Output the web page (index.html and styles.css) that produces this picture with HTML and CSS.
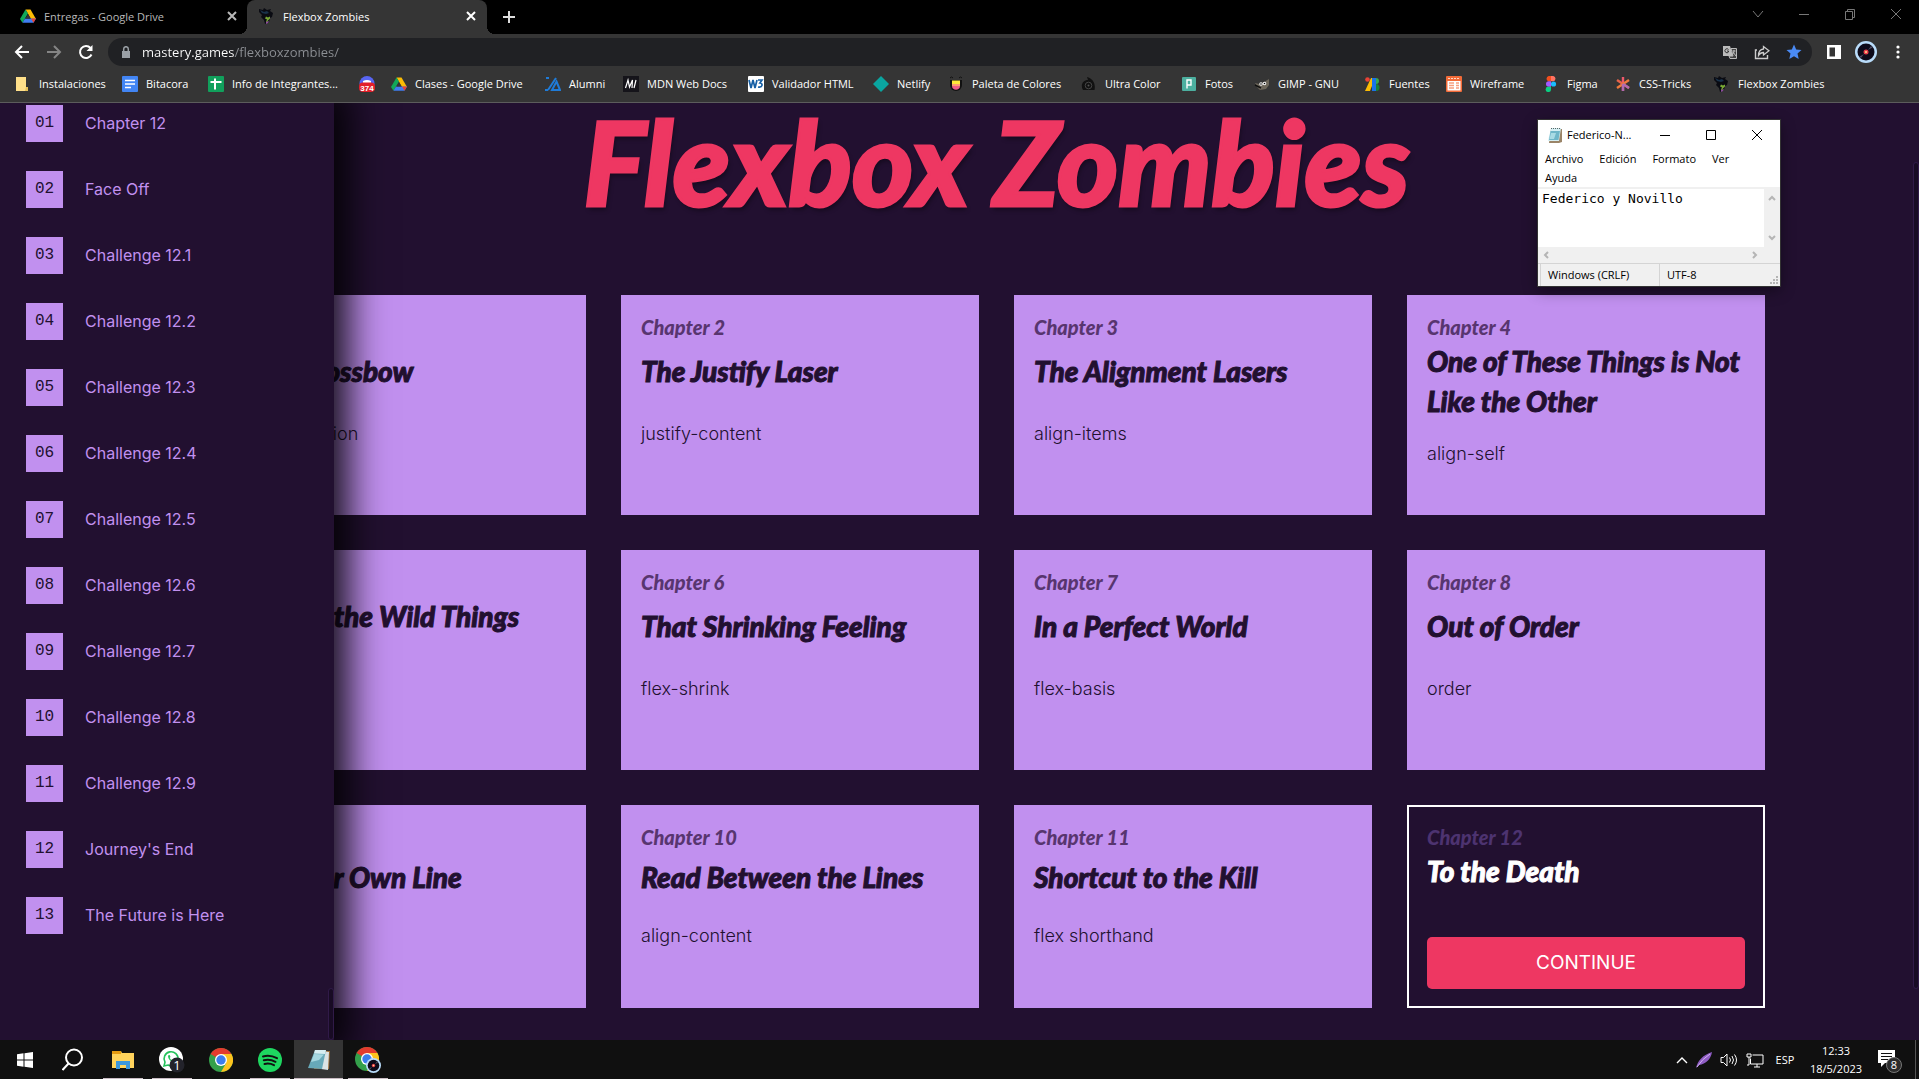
FILE: index.html
```html
<!DOCTYPE html>
<html lang="es">
<head>
<meta charset="utf-8">
<meta name="viewport" content="width=device-width, initial-scale=1">
<title>Flexbox Zombies</title>
<link rel="stylesheet" href="styles.css">
</head>
<body>
<svg class="sprite" aria-hidden="true">
  <symbol id="drive" viewBox="0 0 16 16"><path d="M5.5 1.500h5L16 11h-5z" fill="#fbbc04"/><path d="M5.500 1.500 0 11l2.500 3.700L8 5.500z" fill="#11a85a"/><path d="M5 10.500h11l-2.500 4.200h-11z" fill="#3f7df0"/><path d="M11 10.500h5l-2.500 4.200z" fill="#e94235"/><path d="m8 6 2.600 4.500H5.400z" fill="#353535"/></symbol>
  <symbol id="zombie" viewBox="0 0 16 16"><path d="M0 1l4 1 1-2 3 2 4-1-1 2 3 2-1 4-2 1-1 4-4 2-1-4-3-3 1-2-3-3z" fill="#0a0b12"/><path d="M1 2l4 2 3-1 2 2-3 1-4-1z" fill="#19324a"/><path d="M7 8.500l2 1 2-1v2l-2 2-1 2-1-1 1-2-2-1z" fill="#78a834"/><path d="M7 14l3-1-1 2-2 1z" fill="#8b4c9a"/></symbol>
  <symbol id="chrome" viewBox="0 0 24 24"><circle cx="12" cy="12" r="12" fill="#34a04b"/><path d="M12 12 1.600 6A12 12 0 0 1 22.400 6z" fill="#e33b2e"/><path d="M12 6h10.400A12 12 0 0 1 12 24l5.200-9z" fill="#fcc31e"/><circle cx="12" cy="12" r="6" fill="#fff"/><circle cx="12" cy="12" r="4.700" fill="#3b7ded"/></symbol>
  <symbol id="avatar" viewBox="0 0 22 22"><circle cx="11" cy="11" r="11" fill="#b9dcfa"/><circle cx="11" cy="11" r="8.500" fill="#0d0a1a"/><path d="M13 9 16 5a8 8 0 0 1 1.500 1.500zM9 13l-3 4a8 8 0 0 1-1.500-1.500z" fill="#4d4b62"/><circle cx="11" cy="11" r="2.500" fill="#e83e4c"/><circle cx="11" cy="11" r="1" fill="#ffd98a"/></symbol>
  <symbol id="notes" viewBox="0 0 16 16"><path d="M4 2h11v13l-3 1H2z" fill="#9a8468"/><path d="M4 1h10l-2 13H1z" fill="#d6eff3"/><path d="M3.500 4H13l-1.500 9H2z" fill="#6fb6c8"/><path d="M4 6h5L7 12H2.500z" fill="#a9dbe4"/><path d="M4 1.500h10" stroke="#566" stroke-dasharray="1 1"/></symbol>
</svg>

<header class="browser">
  <div class="tabstrip" role="tablist">
    <button class="tab" role="tab"><svg class="ico"><use href="#drive"/></svg><span class="tab-name">Entregas - Google Drive</span><svg class="x" viewBox="0 0 10 10"><path d="m1 1 8 8M9 1 1 9"/></svg></button>
    <button class="tab active" role="tab" aria-selected="true"><svg class="ico"><use href="#zombie"/></svg><span class="tab-name">Flexbox Zombies</span><svg class="x" viewBox="0 0 10 10"><path d="m1 1 8 8M9 1 1 9"/></svg></button>
    <button class="new-tab" aria-label="Nueva pestaña"><svg width="12" height="12" viewBox="0 0 12 12"><path d="M6 0v12M0 6h12" stroke="#ddd" stroke-width="2"/></svg></button>
    <div class="win-buttons">
      <button aria-label="Buscar pestañas"><svg viewBox="0 0 12 12"><path d="m1 3 5 6 5-6"/></svg></button>
      <button aria-label="Minimizar"><svg viewBox="0 0 12 12"><path d="M1 6.500h10"/></svg></button>
      <button aria-label="Restaurar"><svg viewBox="0 0 12 12"><path d="M1.500 3.500h7v8h-7zM3.500 3.500v-2h7v8h-2"/></svg></button>
      <button aria-label="Cerrar"><svg viewBox="0 0 12 12"><path d="m1 1 10 10M11 1 1 11"/></svg></button>
    </div>
  </div>

  <div class="toolbar">
    <button aria-label="Atrás"><svg viewBox="0 0 16 16"><path d="M15 8H2M8 2 2 8l6 6" fill="none" stroke="#fff" stroke-width="2"/></svg></button>
    <button aria-label="Adelante"><svg viewBox="0 0 16 16"><path d="M1 8h13M8 2l6 6-6 6" fill="none" stroke="#858585" stroke-width="2"/></svg></button>
    <button aria-label="Recargar"><svg viewBox="0 0 16 16"><path d="M13.500 10.500A6 6 0 1 1 12.500 4" fill="none" stroke="#fff" stroke-width="2"/><path d="M14.500 1v6h-6z" fill="#fff"/></svg></button>
    <div class="omnibox">
      <svg class="lock" viewBox="0 0 10 12"><rect x="1" y="5" width="8" height="7" fill="#9aa0a6"/><path d="M2.700 5V3a2.300 2.300 0 0 1 4.600 0v2" fill="none" stroke="#9aa0a6" stroke-width="1.500"/></svg>
      <input class="url" type="text" value="mastery.games/flexboxzombies/" aria-label="Dirección">
      <button aria-label="Traducir"><svg viewBox="0 0 16 16"><path d="M1 2h7l3 10H1z" fill="#bbb"/><path d="M9 4.500h5.500v10H8L7 12h4z" fill="#444" stroke="#bbb"/><path d="M10.500 7h3M12 6v1c0 2-1 3-2 4M11 8l3 4" stroke="#bbb" fill="none"/><path d="M6.500 5.500a2 2 0 1 0 0 2.500V7H5" stroke="#333" fill="none"/></svg></button>
      <button aria-label="Compartir"><svg viewBox="0 0 16 16"><path d="M3 6H1.500v8.500h12V11" fill="none" stroke="#ccc" stroke-width="1.400"/><path d="M9.500 2.500V5C6 5.500 4.500 8 4.500 11.500 6 9 7.500 8.500 9.500 8.500V11L15 6.700z" fill="none" stroke="#ccc" stroke-width="1.300"/></svg></button>
      <button aria-label="Marcador"><svg viewBox="0 0 16 16"><path d="m8 .5 2.200 5 5.300.5-4 3.600 1.200 5.400L8 12.200 3.300 15l1.200-5.400-4-3.600 5.300-.5z" fill="#4a8af4"/></svg></button>
    </div>
    <button aria-label="Panel lateral"><svg viewBox="0 0 16 16"><path d="M1 1h14v14H1zM3.500 3.500v9H9v-9z" fill="#fff" fill-rule="evenodd"/></svg></button>
    <button class="profile" aria-label="Perfil"><svg><use href="#avatar"/></svg></button>
    <button aria-label="Menú"><svg viewBox="0 0 16 16" fill="#fff"><circle cx="8" cy="3" r="1.600"/><circle cx="8" cy="8" r="1.600"/><circle cx="8" cy="13" r="1.600"/></svg></button>
  </div>

  <nav class="bookmarks" aria-label="Marcadores">
    <a href="#"><svg class="ico" viewBox="0 0 16 16"><path d="M1 1h10v10h2v4H1z" fill="#ffe08a"/><path d="M11 11h2v4h-3z" fill="#e8c25a"/></svg>Instalaciones</a>
    <a href="#"><svg class="ico" viewBox="0 0 16 16"><rect width="16" height="16" rx="1" fill="#4285f4"/><path d="M3 4.500h10M3 8h10M3 11.500h6" stroke="#fff" stroke-width="1.700"/></svg>Bitacora</a>
    <a href="#"><svg class="ico" viewBox="0 0 16 16"><rect width="16" height="16" rx="1" fill="#11a05c"/><path d="M2.500 6h11M7 2.500v11" stroke="#fff" stroke-width="2"/></svg>Info de Integrantes...</a>
    <a href="#" aria-label="374"><svg class="ico" viewBox="0 0 16 16"><circle cx="8" cy="7.500" r="7.500" fill="#5865f2"/><path d="M4 5q4-2 8 0v3H4z" fill="#fff"/><rect y="6.500" width="16" height="9.500" rx="4" fill="#e3202a"/><text x="8" y="14.500" text-anchor="middle" class="badge-text">374</text></svg></a>
    <a href="#"><svg class="ico"><use href="#drive"/></svg>Clases - Google Drive</a>
    <a href="#"><svg class="ico" viewBox="0 0 16 16"><path d="M1 2h3M11 2 3 14M0 14h3" fill="none" stroke="#1f7bd8" stroke-width="2"/><path d="M11.500 5.500 15 14H7z" fill="none" stroke="#1f7bd8" stroke-width="2"/></svg>Alumni</a>
    <a href="#"><svg class="ico" viewBox="0 0 16 16"><rect width="16" height="16" fill="#15141a"/><path d="m2.500 12 2.500-8 1.500 7L9.500 4 9 12m4-8-2 8" fill="none" stroke="#fff" stroke-width="1.200"/></svg>MDN Web Docs</a>
    <a href="#"><svg class="ico" viewBox="0 0 16 16"><rect width="16" height="16" rx="1" fill="#fff"/><path d="m1 4 2 8 2-8 2 8 2-8" fill="none" stroke="#1760a5" stroke-width="1.700"/><path d="M10 4h4l-2 3c3 0 3 5-2 4" fill="none" stroke="#1760a5" stroke-width="1.700"/></svg>Validador HTML</a>
    <a href="#"><svg class="ico" viewBox="0 0 16 16"><path d="m8 0 8 8-8 8-8-8z" fill="#0aa5a0"/></svg>Netlify</a>
    <a href="#"><svg class="ico" viewBox="0 0 16 16"><path d="M2 4h12v5a6 6 0 0 1-12 0z" fill="#111"/><path d="M4 4.500h8V8H4z" fill="#ffe838"/><path d="M4 8h8v2H4z" fill="#ff9b73"/><path d="M4 10h8c0 5-8 5-8 0z" fill="#ef5c87"/><path d="M2 2q1.500-2 3 0M11 2q1.500-2 3 0" stroke="#111" fill="none"/></svg>Paleta de Colores</a>
    <a href="#"><svg class="ico" viewBox="0 0 16 16"><path d="M6 1c5 1 9 6 7.500 13H2C-1 9 2 4 7 4z" fill="#111"/><circle cx="7.500" cy="9.500" r="3.300" fill="none" stroke="#444"/><circle cx="7.500" cy="9.500" r="1" fill="#555"/></svg>Ultra Color</a>
    <a href="#"><svg class="ico" viewBox="0 0 16 16"><rect x="1" y="1" width="14" height="14" rx="1" fill="#4caf9f"/><path d="M6 12.500V4h4v5H6" fill="none" stroke="#fff" stroke-width="1.400"/></svg>Fotos</a>
    <a href="#"><svg class="ico" viewBox="0 0 16 16"><path d="M1 7l4 1 5-2 5-3v6l-3 4-6 1-3-3z" fill="#6c665a"/><circle cx="7" cy="8" r="1.700" fill="#fff"/><circle cx="10.500" cy="7.500" r="1.700" fill="#fff"/><circle cx="7" cy="8" r=".8"/><circle cx="10.500" cy="7.500" r=".8"/><path d="m1 9 6 3" stroke="#111" stroke-width="1.500"/></svg>GIMP - GNU</a>
    <a href="#"><svg class="ico" viewBox="0 0 16 16"><circle cx="2.500" cy="3.500" r="2.300" fill="#ea4335"/><path d="M6 2h4L5 15H0z" fill="#fbbc04"/><path d="M7 2h4v13H7z" fill="#1a73e8"/><path d="M11 2a3 3 0 0 1 0 6z" fill="#34a853"/><path d="M11 8a3.500 3.500 0 0 1 0 7z" fill="#188038"/></svg>Fuentes</a>
    <a href="#"><svg class="ico" viewBox="0 0 16 16"><rect width="16" height="16" rx="1" fill="#f26b38"/><path d="M1.500 5h13v9.500h-13z" fill="#fff"/><path d="M2 2.500h12" stroke="#ffd9c8" stroke-dasharray="2 1"/><path d="M3 7h5M3 9.500h5M3 12h5M10 7h3M10 9.500h3M10 12h3" stroke="#f6a080" stroke-width="1.300"/></svg>Wireframe</a>
    <a href="#"><svg class="ico" viewBox="0 0 16 16"><path d="M8 0H5.700a2.700 2.700 0 0 0 0 5.300H8z" fill="#f24e1e"/><path d="M8 0h2.300a2.700 2.700 0 0 1 0 5.300H8z" fill="#ff7262"/><path d="M8 5.300H5.700a2.700 2.700 0 0 0 0 5.400H8z" fill="#a259ff"/><circle cx="10.500" cy="8" r="2.600" fill="#1abcfe"/><path d="M8 10.700H5.700A2.700 2.700 0 1 0 8 13.300z" fill="#0acf83"/></svg>Figma</a>
    <a href="#"><svg class="ico" viewBox="0 0 16 16" stroke-width="2.400"><path d="M8 1v14" stroke="#ee5a6a"/><path d="m2 4 12 8" stroke="#e8634a"/><path d="M14 4 2 12" stroke="#f0793c"/><path d="m8 8 6 4M8 8v7" stroke="#b06ab0"/></svg>CSS-Tricks</a>
    <a href="#"><svg class="ico"><use href="#zombie"/></svg>Flexbox Zombies</a>
  </nav>
</header>

<div class="page">
  <main class="home">
    <h1 class="hero">Flexbox Zombies</h1>
    <section class="chapters">
      <article class="card"><p class="num">Chapter 1</p><h2>The Crossbow</h2><p class="prop">flex-direction</p></article>
      <article class="card"><p class="num">Chapter 2</p><h2>The Justify Laser</h2><p class="prop">justify-content</p></article>
      <article class="card"><p class="num">Chapter 3</p><h2>The Alignment Lasers</h2><p class="prop">align-items</p></article>
      <article class="card"><p class="num">Chapter 4</p><h2>One of These Things is Not Like the Other</h2><p class="prop">align-self</p></article>
      <article class="card"><p class="num">Chapter 5</p><h2>Where the Wild Things Grow</h2><p class="prop">flex-grow</p></article>
      <article class="card"><p class="num">Chapter 6</p><h2>That Shrinking Feeling</h2><p class="prop">flex-shrink</p></article>
      <article class="card"><p class="num">Chapter 7</p><h2>In a Perfect World</h2><p class="prop">flex-basis</p></article>
      <article class="card"><p class="num">Chapter 8</p><h2>Out of Order</h2><p class="prop">order</p></article>
      <article class="card short"><p class="num">Chapter 9</p><h2>On Your Own Line</h2><p class="prop">flex-wrap</p></article>
      <article class="card short"><p class="num">Chapter 10</p><h2>Read Between the Lines</h2><p class="prop">align-content</p></article>
      <article class="card short"><p class="num">Chapter 11</p><h2>Shortcut to the Kill</h2><p class="prop">flex shorthand</p></article>
      <article class="card current"><p class="num">Chapter 12</p><h2>To the Death</h2><button class="continue">CONTINUE</button></article>
    </section>
  </main>

  <aside class="drawer">
    <nav class="levels" aria-label="Niveles">
      <a href="#"><span class="level-num">01</span>Chapter 12</a>
      <a href="#"><span class="level-num">02</span>Face Off</a>
      <a href="#"><span class="level-num">03</span>Challenge 12.1</a>
      <a href="#"><span class="level-num">04</span>Challenge 12.2</a>
      <a href="#"><span class="level-num">05</span>Challenge 12.3</a>
      <a href="#"><span class="level-num">06</span>Challenge 12.4</a>
      <a href="#"><span class="level-num">07</span>Challenge 12.5</a>
      <a href="#"><span class="level-num">08</span>Challenge 12.6</a>
      <a href="#"><span class="level-num">09</span>Challenge 12.7</a>
      <a href="#"><span class="level-num">10</span>Challenge 12.8</a>
      <a href="#"><span class="level-num">11</span>Challenge 12.9</a>
      <a href="#"><span class="level-num">12</span>Journey's End</a>
      <a href="#"><span class="level-num">13</span>The Future is Here</a>
    </nav>
    <span class="thumb drawer-thumb"></span>
  </aside>
  <span class="thumb page-thumb"></span>
</div>

<section class="notepad" aria-label="Bloc de notas">
  <div class="np-title">
    <svg class="ico"><use href="#notes"/></svg><span class="np-name">Federico-N...</span>
    <button aria-label="Minimizar"><svg viewBox="0 0 12 12"><path d="M1 6.500h10"/></svg></button>
    <button aria-label="Maximizar"><svg viewBox="0 0 12 12"><path d="M1.500 1.500h9v9h-9z"/></svg></button>
    <button aria-label="Cerrar"><svg viewBox="0 0 12 12"><path d="m1 1 10 10M11 1 1 11"/></svg></button>
  </div>
  <div class="np-menu"><button>Archivo</button><button>Edición</button><button>Formato</button><button>Ver</button><button>Ayuda</button></div>
  <div class="np-body">
    <textarea aria-label="Texto" spellcheck="false">Federico y Novillo</textarea>
    <div class="np-vscroll"><svg viewBox="0 0 8 6"><path d="m1 5 3-3 3 3"/></svg><svg viewBox="0 0 8 6"><path d="m1 1 3 3 3-3"/></svg></div>
  </div>
  <div class="np-hscroll"><svg viewBox="0 0 6 8"><path d="M5 1 2 4l3 3"/></svg><svg viewBox="0 0 6 8"><path d="m1 1 3 3-3 3"/></svg></div>
  <div class="np-status"><span class="np-eol">Windows (CRLF)</span><span class="np-enc">UTF-8</span><svg width="8" height="8" viewBox="0 0 8 8" fill="#b5b5b5"><path d="M6 0h2v2H6zM6 3h2v2H6zM3 3h2v2H3zM6 6h2v2H6zM3 6h2v2H3zM0 6h2v2H0z"/></svg></div>
</section>

<footer class="taskbar">
  <div class="apps">
    <button aria-label="Inicio"><svg width="16" height="16" viewBox="0 0 16 16" fill="#fff"><path d="M0 2.200 6.500 1.300v6.200H0zM7.500 1.200 16 0v7.500H7.500zM0 8.500h6.500v6.200L0 13.800zM7.500 8.500H16V16l-8.500-1.200z"/></svg></button>
    <button aria-label="Buscar"><svg width="24" height="24" viewBox="2 0 24 24"><circle cx="14" cy="9.500" r="8" fill="none" stroke="#fff" stroke-width="2"/><path d="m8.500 15.500-6 6.500" stroke="#fff" stroke-width="2"/></svg></button>
    <button class="open" aria-label="Explorador"><svg width="22" height="22" viewBox="0 0 22 22"><path d="M0 2h9l1 2h12v15H0z" fill="#ffd35c"/><path d="M0 2h9v3H0z" fill="#e59b12"/><path d="M4 12h14v8h-4v-4H8v4H4z" fill="#3c97dc"/></svg></button>
    <button class="open" aria-label="WhatsApp"><svg width="26" height="26" viewBox="0 0 26 26"><circle cx="12" cy="12" r="12" fill="#fff"/><path d="m5 19 1-3.800A7 7 0 1 1 9 18z" fill="none" stroke="#25c25b" stroke-width="1.600"/><path d="M9 8.500c0 4 3 6.500 6 6.500l1-1.500-2-1-1 .7c-1-.4-2-1.400-2.200-2.400l.7-.8-.8-2z" fill="#25c25b"/><circle cx="18" cy="18" r="7.500" fill="#23232b"/><text x="18" y="23" text-anchor="middle" class="count">1</text></svg></button>
    <button aria-label="Chrome"><svg width="24" height="24"><use href="#chrome"/></svg></button>
    <button class="open" aria-label="Spotify"><svg width="24" height="24" viewBox="0 0 24 24"><circle cx="12" cy="12" r="12" fill="#1ed760"/><path d="M5 8.500q7-2 14 1.700M5.800 12.300q6-1.500 11.700 1.500M6.500 16q5-1.200 9.500 1.200" fill="none" stroke="#111" stroke-width="2" stroke-linecap="round"/></svg></button>
    <button class="open focus" aria-label="Bloc de notas"><svg width="24" height="24" viewBox="0 0 24 24"><path d="M8 3h15l-1 18H7z" fill="#9b6c38"/><path d="m15 3 7 1-1 18-7-1z" fill="#dbe3e5"/><path d="M8 2h11l-4 19-14-1z" fill="#67a9b9"/><path d="M8 2h11l-1 4-11-.500z" fill="#d7eef2"/><path d="m7 6 10 .500L12 12 4 14z" fill="#a5d7e0"/></svg></button>
    <button class="open" aria-label="Chrome, perfil"><svg width="26" height="26" viewBox="0 0 26 26"><use href="#chrome" width="24" height="24"/><use href="#avatar" x="11" y="11" width="15" height="15"/></svg></button>
  </div>
  <div class="tray">
    <svg width="12" height="12" viewBox="0 0 12 12"><path d="m1 9 5-5 5 5" fill="none" stroke="#fff" stroke-width="1.400"/></svg>
    <svg width="16" height="16" viewBox="0 0 16 16"><path d="M0 16C2 8 7 3 16 0c-1 7-6 12-13 13z" fill="#8e5cc4"/><path d="M1 15Q6 7 14 2" stroke="#d3b3f2" fill="none"/></svg>
    <svg width="18" height="16" viewBox="0 0 18 16"><path d="M1 5.500h2.500L7 2v12l-3.500-3.500H1zM9.500 5.500q2 2.500 0 5M12 4q3 4 0 8M14.500 2.500q4 5.500 0 11" fill="none" stroke="#fff"/></svg>
    <svg width="18" height="16" viewBox="0 0 18 16"><path d="M4.500 6.500V12H17V3H6.500M8 15h6M11 12v3M1 2h4v3H1zM3 5v8H1" fill="none" stroke="#fff"/></svg>
    <span class="lang">ESP</span>
    <time class="clock" datetime="2023-05-18T12:33"><span>12:33</span><span>18/5/2023</span></time>
    <button class="notify" aria-label="8 notificaciones"><svg width="26" height="26" viewBox="0 0 26 26"><path d="M1 3h17v13H8l-4 4v-4H1z" fill="#fff"/><path d="M4 6.500h11M4 9.500h11M4 12.500h7" stroke="#111"/><circle cx="17" cy="18" r="7.500" fill="#2b2b2b" stroke="#777"/><text x="17" y="22" text-anchor="middle" class="note-count">8</text></svg></button>
  </div>
</footer>
</body>
</html>
```
FILE: styles.css
```css
:root {
  --night: #221030;
  --lilac: #c190ef;
  --pink: #ee3762;
  --chrome: #353535;
  --ui: "Open Sans", "Noto Sans", sans-serif;
  --body: Inter, sans-serif;
  --display: Lato, sans-serif;
}

* { box-sizing: border-box; }

body {
  margin: 0;
  height: 100vh;
  display: flex;
  flex-direction: column;
  overflow: hidden;
  background: var(--night);
  font-family: var(--ui);
  font-size: 12px;
}

button {
  padding: 0;
  border: 0;
  background: none;
  color: inherit;
  font: inherit;
}

a { color: inherit; text-decoration: none; }
h1, h2, p { margin: 0; }
svg { display: block; flex: none; }
.sprite { position: absolute; width: 0; height: 0; }
.ico { width: 16px; height: 16px; }

/* Browser frame */
.browser { flex: none; background: var(--chrome); border-bottom: 1px solid #5c5c5c; }
.tabstrip { display: flex; height: 34px; background: #000; }

.tab {
  display: flex;
  align-items: center;
  gap: 8px;
  width: 240px;
  padding: 0 11px 2px 12px;
  color: #b8b8b8;
  font-size: 11px;
  text-align: left;
}
.tab:first-child { width: 247px; padding: 0 10px 2px 20px; }
.tab.active {
  position: relative;
  background: var(--chrome);
  border-radius: 8px 8px 0 0;
  color: #fff;
}
.tab.active::before, .tab.active::after {
  content: "";
  position: absolute;
  bottom: 0;
  width: 8px;
  height: 8px;
}
.tab.active::before { left: -8px; background: radial-gradient(circle at 0 0, transparent 8px, var(--chrome) 8px); }
.tab.active::after { right: -8px; background: radial-gradient(circle at 100% 0, transparent 8px, var(--chrome) 8px); }
.tab-name { flex: 1; }
.x { width: 10px; height: 10px; fill: none; stroke: currentColor; stroke-width: 2; }
.new-tab { width: 44px; display: grid; place-items: center; }
.win-buttons { display: flex; margin-left: auto; height: 28px; }
.win-buttons button { width: 46px; display: grid; place-items: center; }
.win-buttons svg { width: 12px; height: 12px; fill: none; stroke: #777; }

.toolbar {
  display: flex;
  align-items: center;
  height: 36px;
  padding: 0 5px 0 6px;
}
.toolbar button { width: 32px; height: 28px; display: grid; place-items: center; }
.toolbar button svg { width: 16px; height: 16px; }
.toolbar .profile svg { width: 22px; height: 22px; }
.omnibox {
  flex: 1;
  display: flex;
  align-items: center;
  height: 28px;
  margin: 0 6px;
  padding: 0 2px 0 13px;
  border-radius: 14px;
  background: #202124;
}
.lock { width: 10px; height: 12px; margin-right: 11px; }
.url {
  flex: 1;
  padding: 0;
  border: 0;
  outline: 0;
  font: 13px/20px var(--ui);
  color: transparent;
  background: linear-gradient(90deg, #fff 92px, #8d9095 92px);
  -webkit-background-clip: text;
  background-clip: text;
}

.bookmarks {
  display: grid;
  grid-template-columns: 107px 86px 151px 32px 154px 78px 125px 125px 75px 133px 100px 73px 111px 81px 97px 72px 99px auto;
  align-items: center;
  height: 32px;
  padding-left: 15px;
  padding-bottom: 5px;
  color: #fff;
  font-size: 11px;
}
.bookmarks a { display: flex; align-items: center; gap: 8px; white-space: nowrap; }
.badge-text { fill: #fff; font: bold 8px "Liberation Sans", sans-serif; }

/* Game page */
.page { position: relative; flex: 1; min-height: 0; overflow: hidden; }
.home { padding: 0 154px 35px 228px; }
.hero {
  height: 192px;
  color: var(--pink);
  font: italic 900 117px/117px var(--display);
  text-align: center;
  text-shadow: 2px 4px 4px rgba(0, 0, 0, .35);
  -webkit-text-stroke: 3px var(--pink);
}
.chapters { display: grid; grid-template-columns: repeat(4, 1fr); gap: 35px; }
.card {
  min-height: 220px;
  padding: 20px;
  background: var(--lilac);
  color: var(--night);
}
.card .num { color: #58356f; font: italic 900 20px/24px var(--display); }
.card h2 {
  display: flex;
  align-items: center;
  min-height: 60px;
  margin-top: 2px;
  font: italic 900 28px/40px var(--display);
  -webkit-text-stroke: 1px currentColor;
}
.card .prop { margin-top: 20px; font: 300 18px/26px var(--body); }
.card.short, .card.current { min-height: 203px; }
.card.short h2 { min-height: 52px; }
.card.current { padding: 18px 18px 17px; border: 2px solid #fff; background: none; color: #fff; }
.card.current .num { color: #4d3370; }
.card.current h2 { min-height: 40px; }
.continue {
  width: 100%;
  height: 52px;
  margin-top: 46px;
  border-radius: 5px;
  background: var(--pink);
  font: 19px/24px var(--body);
}

.drawer {
  position: absolute;
  inset: 0 auto 0 0;
  width: 334px;
  background: var(--night);
  box-shadow: 0 0 36px 15px rgba(0, 0, 0, .9);
}
.levels { display: flex; flex-direction: column; gap: 29px; padding: 2px 26px; }
.levels a {
  display: flex;
  align-items: center;
  gap: 22px;
  color: var(--lilac);
  font: 16px/37px var(--body);
}
.level-num {
  width: 37px;
  background: var(--lilac);
  color: var(--night);
  font-family: "Liberation Mono", monospace;
  text-align: center;
}
.thumb { position: absolute; background: #180b24; border: 1px solid #301a48; border-radius: 4px; }
.drawer-thumb { right: 0; bottom: 0; width: 6px; height: 52px; }
.page-thumb { right: 0; top: 59px; bottom: 51px; width: 6px; }

/* Floating editor window */
.notepad {
  position: absolute;
  top: 120px;
  right: 139px;
  width: 242px;
  background: #fff;
  color: #000;
  font-size: 11px;
  outline: 1px solid #333;
  box-shadow: 0 4px 14px rgba(0, 0, 0, .45);
}
.np-title { display: flex; align-items: center; height: 29px; padding-left: 9px; }
.np-name { flex: 1; padding-left: 4px; }
.np-title button { width: 46px; height: 28px; display: grid; place-items: center; }
.np-title button svg { width: 12px; height: 12px; fill: none; stroke: #000; }
.np-menu { display: flex; flex-wrap: wrap; column-gap: 16px; padding: 0 40px 0 7px; border-bottom: 2px solid #f0f0f0; }
.np-menu button { line-height: 19px; }
.np-body { display: flex; height: 58px; }
.np-body textarea {
  flex: 1;
  min-width: 0;
  padding: 0 4px;
  border: 0;
  outline: 0;
  resize: none;
  overflow: hidden;
  background: #fff;
  color: #000;
  font: 13px/19px "DejaVu Sans Mono", monospace;
}
.np-vscroll, .np-hscroll { display: flex; justify-content: space-between; align-items: center; background: #f0f0f0; }
.np-vscroll { flex-direction: column; width: 16px; padding: 6px 0; }
.np-hscroll { height: 16px; padding: 0 22px 0 5px; }
.np-vscroll svg { width: 8px; height: 6px; }
.np-hscroll svg { width: 6px; height: 8px; }
.np-vscroll svg, .np-hscroll svg { fill: none; stroke: #b5b5b5; stroke-width: 2; }
.np-status { display: flex; height: 23px; padding: 0 2px; background: #f0f0f0; border-top: 1px solid #d4d4d4; line-height: 22px; }
.np-eol { width: 119px; padding-left: 7px; border-left: 1px solid #d4d4d4; }
.np-enc { flex: 1; padding-left: 7px; border-left: 1px solid #d4d4d4; }
.np-status svg { align-self: flex-end; margin-bottom: 2px; }

/* Taskbar */
.taskbar {
  flex: none;
  display: flex;
  justify-content: space-between;
  height: 39px;
  background: #101010;
  color: #fff;
}
.apps { display: flex; }
.apps button { position: relative; width: 49px; display: grid; place-items: center; }
.apps .open::after {
  content: "";
  position: absolute;
  left: 5px;
  right: 4px;
  bottom: 0;
  height: 1px;
  background: #c9bcc4;
}
.apps .focus { background: #353535; }
.apps .focus::after { left: 0; right: 0; }
.count { fill: #fff; font: 13px var(--ui); }
.note-count { fill: #fff; font: 11px var(--ui); }
.tray { display: flex; align-items: center; gap: 8px; padding-right: 9px; border-right: 1px solid #555; margin-right: 3px; }
.lang { width: 26px; text-align: center; font-size: 11px; }
.clock { display: flex; flex-direction: column; width: 60px; font-size: 11px; line-height: 18px; text-align: center; }
.notify { width: 32px; display: grid; place-items: center; }
```
